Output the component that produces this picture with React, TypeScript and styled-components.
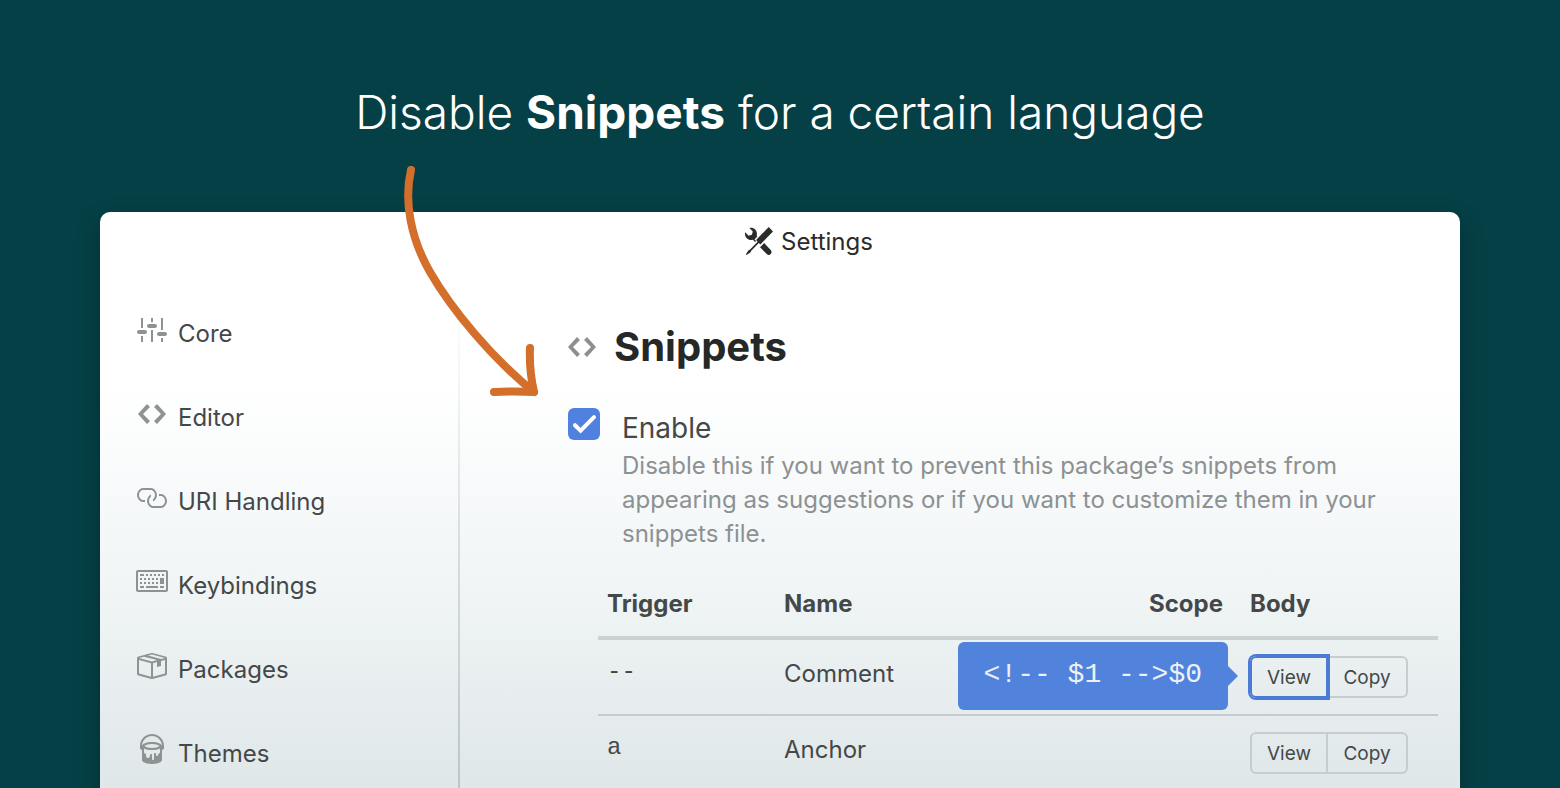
import React from "react";
import styled, { createGlobalStyle, css } from "styled-components";

const GlobalStyle = createGlobalStyle`
  *, *::before, *::after { box-sizing: border-box; }
  body {
    margin: 0;
    background: #054046;
    font-family: Inter, "Liberation Sans", sans-serif;
    -webkit-font-smoothing: antialiased;
  }
`;

const Page = styled.div`
  height: 100vh;
  overflow: hidden;
  display: flex;
  flex-direction: column;
`;

const Banner = styled.h1`
  margin: 0;
  padding: 80px 24px 68px;
  color: #fff;
  font-size: 46px;
  line-height: 64px;
  font-weight: 320;
  text-align: center;

  strong { font-weight: 700; }
`;

const Window = styled.main`
  position: relative;
  flex: 1;
  min-height: 0;
  margin: 0 100px;
  display: flex;
  flex-direction: column;
  border-radius: 10px 10px 0 0;
  background: linear-gradient(#fff 0, #fff 170px, #f1f5f6 370px, #dfe7e8 576px);
  box-shadow: 0 10px 24px rgba(0, 0, 0, 0.28);
`;

const Arrow = styled.svg`
  position: absolute;
  left: 300px;
  top: -52px;
  pointer-events: none;
`;

const TitleBar = styled.header`
  display: flex;
  align-items: center;
  justify-content: center;
  gap: 8px;
  height: 58px;
  padding-left: 58px;
  color: #2b2b2b;
  font-size: 24px;
`;

const Columns = styled.div`
  flex: 1;
  min-height: 0;
  display: flex;
`;

const Sidebar = styled.nav`
  flex: 0 0 358px;
  padding: 44px 36px 0;
  display: flex;
  flex-direction: column;
  gap: 48px;
`;

const Divider = styled.div`
  flex: 0 0 2px;
  margin-top: 20px;
  background: linear-gradient(rgba(60, 80, 80, 0), rgba(60, 80, 80, 0.15) 240px, rgba(60, 80, 80, 0.22));
`;

const NavLink = styled.a`
  display: flex;
  gap: 10px;
  height: 36px;
  color: #444849;
  font-size: 24px;
  line-height: 40px;
  text-decoration: none;

  svg { color: #8d9292; }
`;

const IconBox = styled.svg`
  flex: none;
  overflow: visible;
  fill: currentColor;
`;

const Panel = styled.section`
  flex: 1;
  min-width: 0;
  padding: 50px 22px 0 108px;
`;

const Heading = styled.h2`
  display: flex;
  align-items: center;
  gap: 14px;
  margin: 0 0 34px;
  color: #262727;
  font-size: 40px;
  line-height: 54px;
  font-weight: 700;

  svg { color: #8f8f8f; }
`;

const Option = styled.div`
  display: flex;
  gap: 22px;
`;

const CheckWrap = styled.span`
  position: relative;
  flex: none;
  width: 32px;
  height: 32px;
`;

const Check = styled.input`
  appearance: none;
  display: block;
  width: 32px;
  height: 32px;
  margin: 0;
  border-radius: 6px;
  background: #a9b1b5;

  &:checked { background: #5181df; }
  &:checked + svg { visibility: visible; }
`;

const Tick = styled.svg`
  position: absolute;
  inset: 0;
  visibility: hidden;
  pointer-events: none;
`;

const OptionLabel = styled.label`
  display: block;
  color: #444849;
  font-size: 28px;
  line-height: 40px;
`;

const Hint = styled.p`
  margin: 0;
  padding-top: 1px;
  color: #8c9192;
  font-size: 24px;
  line-height: 34px;
`;

const SnippetTable = styled.table`
  width: calc(100% - 30px);
  margin: 17px 0 0 30px;
  border-collapse: separate;
  border-spacing: 0;
  table-layout: fixed;
  color: #444849;
  font-size: 24px;
`;

const Col = styled.col<{ $width?: number }>`
  ${(p) => p.$width && css`width: ${p.$width}px;`}
`;

const HeadCell = styled.th<{ $align?: "left" | "right" }>`
  padding: 18px 9px 14px;
  border-bottom: 4px solid #ccd1d2;
  line-height: 36px;
  font-weight: 700;
  text-align: ${(p) => p.$align ?? "left"};

  &:last-child { padding-left: 18px; }
`;

const Cell = styled.td`
  height: 76px;
  padding: 16px 9px;
  border-bottom: 2px solid #c6cbcd;
  line-height: 36px;
  vertical-align: top;

  &:last-child { padding-left: 18px; }
`;

const Trigger = styled.code`
  display: block;
  font-family: "Liberation Mono", monospace;
  font-size: 24px;
  line-height: 32px;
`;

const ButtonGroup = styled.div`
  position: relative;
  display: flex;
  width: 158px;
`;

const GroupButton = styled.button<{ $active?: boolean }>`
  flex: 1;
  height: 42px;
  padding: 2px 0 0;
  border: 2px solid #c6cdce;
  border-radius: 0 6px 6px 0;
  background: transparent;
  color: #444849;
  font: 400 19px/36px Inter, "Liberation Sans", sans-serif;

  &:first-child {
    flex: 0 0 78px;
    margin-right: -2px;
    border-radius: 6px 0 0 6px;
  }

  ${(p) =>
    p.$active &&
    css`
      z-index: 1;
      border-color: #4b7bd6;
      box-shadow: 0 0 0 2px #4b7bd6;
    `}
`;

const Tooltip = styled.div`
  position: absolute;
  right: calc(100% + 22px);
  top: -14px;
  height: 68px;
  padding: 0 26px;
  border-radius: 6px;
  background: #5283dc;
  color: #edf1f6;
  font-family: "Liberation Mono", monospace;
  font-size: 28px;
  line-height: 66px;
  white-space: pre;

  &::after {
    content: "";
    position: absolute;
    left: 100%;
    top: 24px;
    border: 10px solid transparent;
    border-right: 0;
    border-left-color: #5283dc;
  }
`;

const icons = {
  tools:
    "M4.48 7.27c.26.26 1.28 1.33 1.28 1.33l.56-.58-.88-.91 1.69-1.8s-.76-.74-.43-.45c.32-1.19.03-2.51-.87-3.44C4.93.5 3.66.2 2.52.51l1.93 2-.51 1.96-1.89.52-1.93-1.99C-.19 4.17.1 5.48 1 6.4c.94.98 2.29 1.26 3.48.87zm6.44 1.94l-2.33 2.3 3.84 3.98c.31.33.73.49 1.14.49.41 0 .82-.16 1.14-.49.63-.65.63-1.7 0-2.35l-3.79-3.93zM16 2.53L13.55 0 6.33 7.46l.88.91-4.31 4.46-.99.53-1.39 2.27.35.37 2.2-1.44.51-1.02L7.9 9.08l.88.91L16 2.53z",
  sliders:
    "M4 7H3V2h1v5zm-1 7h1v-3H3v3zm5 0h1V8H8v6zm5 0h1v-2h-1v2zm1-12h-1v6h1V2zM9 2H8v2h1V2zM5 8H2c-.55 0-1 .45-1 1s.45 1 1 1h3c.55 0 1-.45 1-1s-.45-1-1-1zm5-3H7c-.55 0-1 .45-1 1s.45 1 1 1h3c.55 0 1-.45 1-1s-.45-1-1-1zm5 4h-3c-.55 0-1 .45-1 1s.45 1 1 1h3c.55 0 1-.45 1-1s-.45-1-1-1z",
  code: "M9.5 3L8 4.5 11.5 8 8 11.5 9.5 13 14 8 9.5 3zm-5 0L0 8l4.5 5L6 11.5 2.5 8 6 4.5 4.5 3z",
  link: "M4 9h1v1H4c-1.5 0-3-1.69-3-3.5S2.55 3 4 3h4c1.45 0 3 1.69 3 3.5 0 1.41-.91 2.72-2 3.25V8.59c.58-.45 1-1.27 1-2.09C10 5.22 8.98 4 8 4H4c-.98 0-2 1.22-2 2.5S3 9 4 9zm9-3h-1v1h1c1 0 2 1.22 2 2.5S13.98 12 13 12H9c-.98 0-2-1.22-2-2.5 0-.83.42-1.64 1-2.09V6.25c-1.09.53-2 1.84-2 3.25C6 11.31 7.55 13 9 13h4c1.45 0 3-1.69 3-3.5S14.5 6 13 6z",
  keyboard:
    "M10 5H9V4h1v1zM3 6H2v1h1V6zm5-2H7v1h1V4zM4 4H2v1h2V4zm8 7h2v-1h-2v1zM8 7h1V6H8v1zm-4 3H2v1h2v-1zm8-6h-1v1h1V4zm2 0h-1v1h1V4zm-2 5h2V6h-2v3zm4-6v9c0 .55-.45 1-1 1H1c-.55 0-1-.45-1-1V3c0-.55.45-1 1-1h14c.55 0 1 .45 1 1zm-1 0H1v9h14V3zM6 7h1V6H6v1zm0-3H5v1h1V4zM4 7h1V6H4v1zm1 4h6v-1H5v1zm5-4h1V6h-1v1zM3 8H2v1h1V8zm5 0v1h1V8H8zM6 8v1h1V8H6zM5 8H4v1h1V8zm5 1h1V8h-1v1z",
  box: "M1 4.27v7.47c0 .45.3.84.75.97l6.5 1.73c.16.05.34.05.5 0l6.5-1.73c.45-.13.75-.52.75-.97V4.27c0-.45-.3-.84-.75-.97l-6.5-1.74a1.4 1.4 0 0 0-.5 0L1.75 3.3c-.45.13-.75.52-.75.97zm7 9.09l-6-1.59V5l6 1.61v6.75zM2 4l2.5-.67L11 5.06l-2.5.67L2 4zm13 7.77l-6 1.59V6.61l2-.55V8.5l2-.53V5.53L15 5v6.77zm-2-7.24L6.5 2.8l2-.53L15 4l-2 .53z",
  paint:
    "M6 0C2.69 0 0 2.69 0 6v1c0 .55.45 1 1 1v5c0 1.1 2.24 2 5 2s5-.9 5-2V8c.55 0 1-.45 1-1V6c0-3.31-2.69-6-6-6zm3 10v.5c0 .28-.22.5-.5.5s-.5-.22-.5-.5V10c0-.28-.22-.5-.5-.5s-.5.22-.5.5v2.5c0 .28-.22.5-.5.5s-.5-.22-.5-.5v-2c0-.28-.22-.5-.5-.5s-.5.22-.5.5v.5c0 .55-.45 1-1 1s-1-.45-1-1v-1c-.55 0-1-.45-1-1V7.2c.91.49 2.36.8 4 .8 1.64 0 3.09-.31 4-.8V9c0 .55-.45 1-1 1zM6 7c-1.68 0-3.12-.41-3.71-1C2.88 5.41 4.32 5 6 5c1.68 0 3.12.41 3.71 1-.59.59-2.03 1-3.71 1zm0-3c-2.76 0-5 .89-5 2 0-2.76 2.24-5 5-5s5 2.24 5 5c0-1.1-2.24-2-5-2z",
};

type IconName = keyof typeof icons;

function Icon({ name, size = 32, viewBox = "0 0 16 16" }: { name: IconName; size?: number; viewBox?: string }) {
  return (
    <IconBox width={size} height={size} viewBox={viewBox} aria-hidden="true">
      <path d={icons[name]} fillRule="evenodd" />
    </IconBox>
  );
}

const navItems: { label: string; icon: IconName; viewBox?: string }[] = [
  { label: "Core", icon: "sliders", viewBox: "0.5 0 16 16" },
  { label: "Editor", icon: "code", viewBox: "-1 0 16 16" },
  { label: "URI Handling", icon: "link", viewBox: "0.5 0 16 16" },
  { label: "Keybindings", icon: "keyboard" },
  { label: "Packages", icon: "box", viewBox: "0.5 0 16 16" },
  { label: "Themes", icon: "paint", viewBox: "-2 0 16 16" },
];

const snippets = [
  { trigger: "--", name: "Comment", body: "<!-- $1 -->$0", open: true },
  { trigger: "a", name: "Anchor", body: "", open: false },
];

export default function App() {
  return (
    <>
      <GlobalStyle />
      <Page>
        <Banner>
          Disable <strong>Snippets</strong> for a certain language
        </Banner>
        <Window>
          <TitleBar>
            <Icon name="tools" size={28} />
            Settings
          </TitleBar>
          <Columns>
            <Sidebar>
              {navItems.map((item) => (
                <NavLink key={item.label} href="#">
                  <Icon name={item.icon} viewBox={item.viewBox} />
                  {item.label}
                </NavLink>
              ))}
            </Sidebar>
            <Divider />
            <Panel>
              <Heading>
                <Icon name="code" />
                Snippets
              </Heading>
              <Option>
                <CheckWrap>
                  <Check type="checkbox" id="enable-snippets" defaultChecked />
                  <Tick width="32" height="32" viewBox="0 0 32 32" aria-hidden="true">
                    <path
                      d="M7 17.2l5.6 5.4L26 9.2"
                      fill="none"
                      stroke="#fff"
                      strokeWidth="4"
                      strokeLinecap="round"
                    />
                  </Tick>
                </CheckWrap>
                <div>
                  <OptionLabel htmlFor="enable-snippets">Enable</OptionLabel>
                  <Hint>
                    Disable this if you want to prevent this package’s snippets from appearing as suggestions or if
                    you want to customize them in your snippets file.
                  </Hint>
                </div>
              </Option>
              <SnippetTable>
                <colgroup>
                  <Col $width={177} />
                  <Col />
                  <Col $width={130} />
                  <Col $width={206} />
                </colgroup>
                <thead>
                  <tr>
                    <HeadCell>Trigger</HeadCell>
                    <HeadCell>Name</HeadCell>
                    <HeadCell $align="right">Scope</HeadCell>
                    <HeadCell>Body</HeadCell>
                  </tr>
                </thead>
                <tbody>
                  {snippets.map((s) => (
                    <tr key={s.trigger}>
                      <Cell>
                        <Trigger>{s.trigger}</Trigger>
                      </Cell>
                      <Cell>{s.name}</Cell>
                      <Cell />
                      <Cell>
                        <ButtonGroup>
                          <GroupButton type="button" $active={s.open}>
                            View
                          </GroupButton>
                          <GroupButton type="button">Copy</GroupButton>
                          {s.open && <Tooltip role="tooltip">{s.body}</Tooltip>}
                        </ButtonGroup>
                      </Cell>
                    </tr>
                  ))}
                </tbody>
              </SnippetTable>
            </Panel>
          </Columns>
          <Arrow width="150" height="250" viewBox="400 160 150 250" aria-hidden="true">
            <g fill="none" stroke="#d46e2b" strokeWidth="8" strokeLinecap="round" strokeLinejoin="round">
              <path d="M411 170C404 200 410 237 430 272C452 310 492 358 534 392" />
              <path d="M530 348Q529 370 534 392Q514 391 494 392" />
            </g>
          </Arrow>
        </Window>
      </Page>
    </>
  );
}
